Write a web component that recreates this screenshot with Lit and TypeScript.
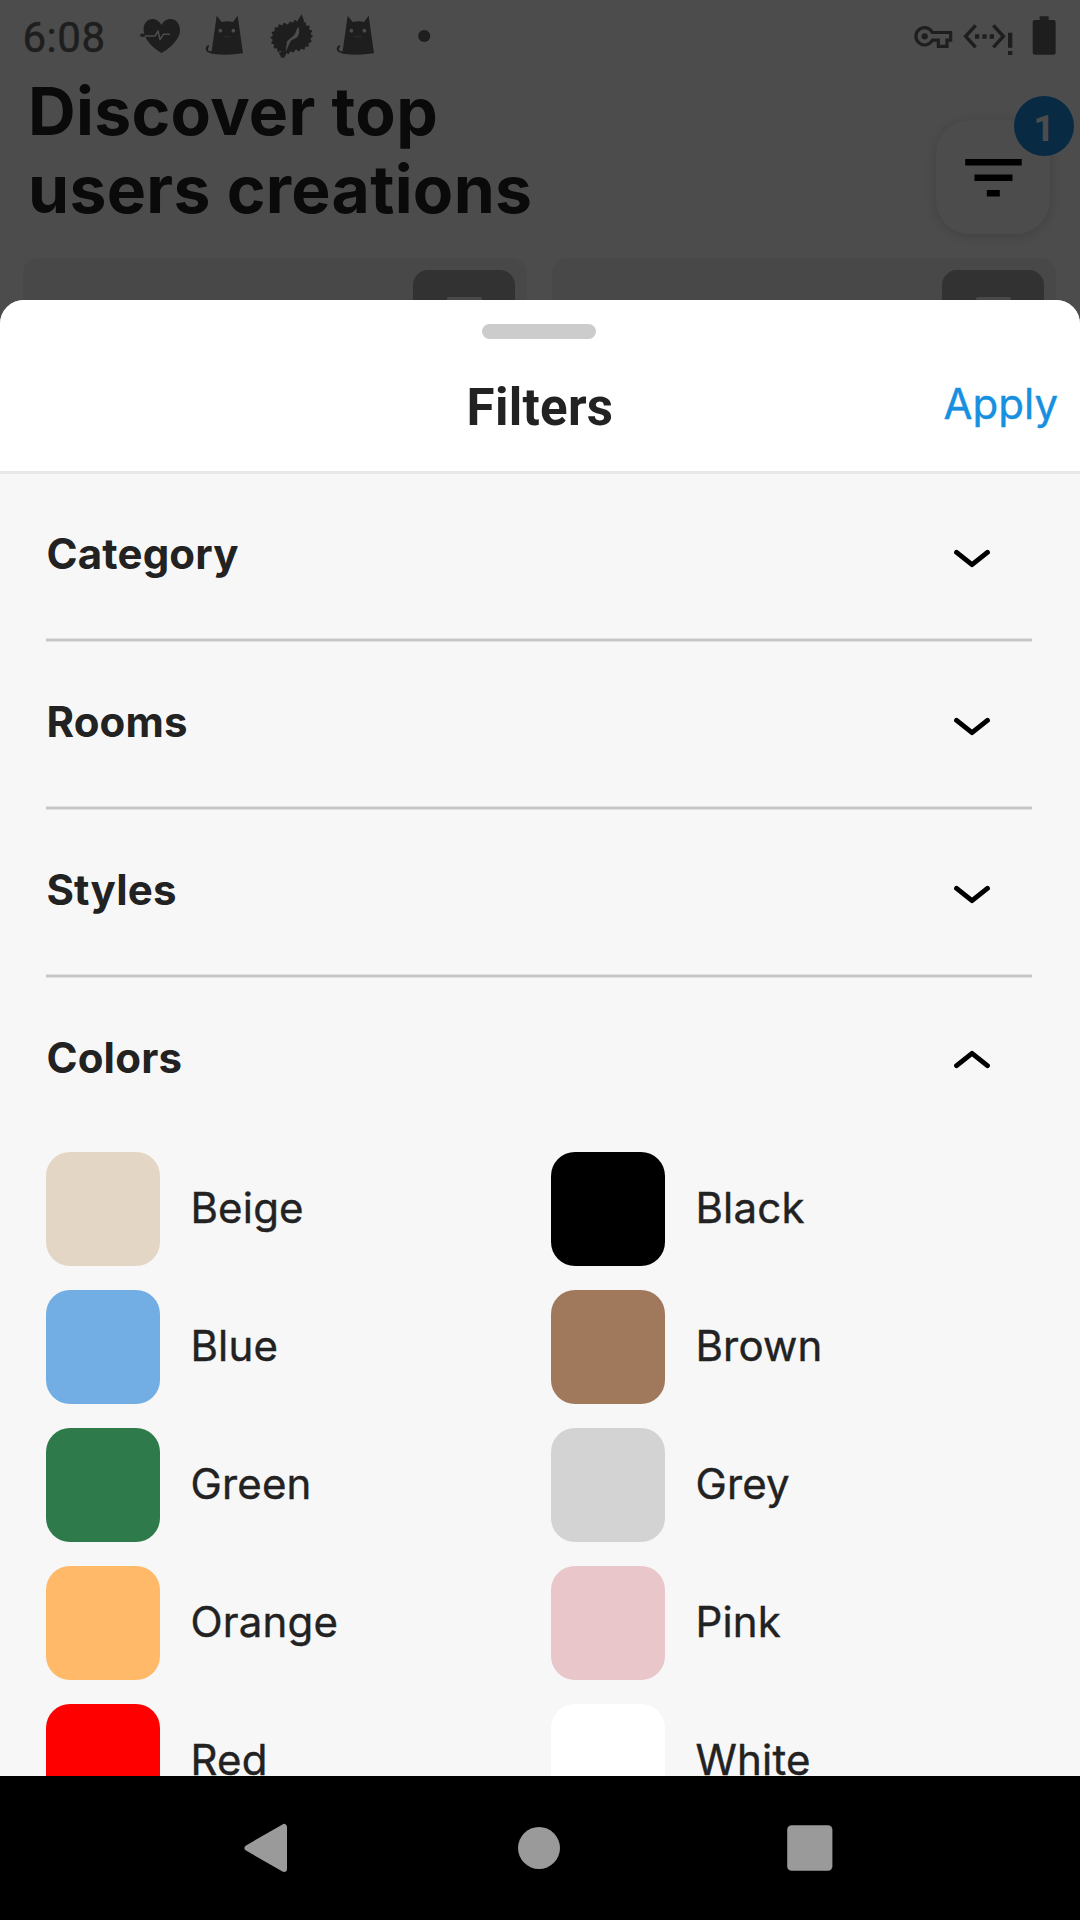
import { LitElement, html, css } from "lit";
import { customElement } from "lit/decorators.js";
import { styleMap } from "lit/directives/style-map.js";

const SECTIONS = ["Category", "Rooms", "Styles"];

const COLORS = [
  { name: "Beige", value: "#e4d6c4" },
  { name: "Black", value: "#000000" },
  { name: "Blue", value: "#72aee4" },
  { name: "Brown", value: "#a0785c" },
  { name: "Green", value: "#2e7a4a" },
  { name: "Grey", value: "#d3d3d3" },
  { name: "Orange", value: "#ffb969" },
  { name: "Pink", value: "#e9c6ca" },
  { name: "Red", value: "#ff0000" },
  { name: "White", value: "#ffffff" },
];

/** Outline of a toothed disc, drawn clockwise from the right. */
function toothedRing(cx: number, cy: number, outer: number, inner: number, teeth: number): string {
  const points: string[] = [];
  for (let i = 0; i < teeth * 4; i++) {
    const a = (i / (teeth * 4)) * Math.PI * 2;
    const r = i % 4 < 2 ? outer : inner;
    points.push(`${(cx + r * Math.cos(a)).toFixed(1)},${(cy + r * Math.sin(a)).toFixed(1)}`);
  }
  return points.join(" ");
}

const cat = html`<svg width="40" height="42" viewBox="610 42 120 126">
  <path fill="#666" d="M648 47L663 66Q680 62 697 66L711 47L727 160Q680 168 634 161Q614 158 615 145Q616 137 624 134L625 140Q619 147 624 152Q628 155 633 153Z" />
  <circle cx="659" cy="92" r="5.5" fill="#fff" />
  <circle cx="698" cy="92" r="5.5" fill="#fff" />
  <path d="M669 110h21" stroke="#8a8a8a" stroke-width="4" fill="none" />
</svg>`;

@customElement("status-bar")
export class StatusBar extends LitElement {
  static styles = css`
    :host {
      display: flex;
      align-items: flex-start;
      justify-content: space-between;
      height: 72px;
      padding: 0 24px 0 22.5px;
      box-sizing: border-box;
      color: #666;
      font: 400 42px/50px Roboto, sans-serif;
    }
    svg { display: block; flex: none; }
    .left, .right { display: flex; align-items: flex-start; }
    .left { padding-top: 13px; }
    .time { width: 117.5px; letter-spacing: 0.5px; -webkit-text-stroke: 0.5px #666; }
    .notes { display: flex; padding-top: 1px; }
    .gap-a { margin-right: 23px; }
    .gap-b { margin-right: 26px; }
    .gap-c { margin-right: 21px; }
    .gap-d { margin-right: 43px; }
    .right { padding-top: 15px; }
    .key { margin-right: 10px; }
    .net { margin-right: 19px; }
  `;
  render() {
    return html`
      <div class="left">
        <div class="time">6:08</div>
        <div class="notes">
          <svg class="gap-a" width="41" height="42" viewBox="420 42 123 126">
            <path fill="#666" d="M485 75C475 57 458 53 445 60C431 68 428 85 433 101H421V110H436C446 132 465 147 485 159C507 146 530 125 538 104C545 79 532 57 511 57C499 57 490 64 485 75Z" />
            <path d="M434 108H465L474 93L480 119L490 103H510" fill="none" stroke="#fff" stroke-width="4.5" stroke-linejoin="round" />
          </svg>
          <span class="gap-b">${cat}</span>
          <svg class="gap-c" width="44" height="46" viewBox="812 42 132 138">
            <polygon fill="#666" points="${toothedRing(861, 115, 47, 42, 18)}" />
            <polygon fill="#666" points="${toothedRing(893, 107, 47, 42, 18)}" />
            <path fill="#666" d="M886 76L907 43L914 62L906 92ZM838 158L847 174L856 172L866 150Z" />
            <path fill="#fff" d="M859 156L862 132C862 117 879 115 886 103C891 96 890 89 897 80C902 91 900 108 890 114C883 119 877 118 873 125Z" />
          </svg>
          <span class="gap-d">${cat}</span>
          <svg width="13" height="42" viewBox="0 0 13 42"><circle cx="6.2" cy="22" r="6.1" fill="#666" /></svg>
        </div>
      </div>
      <div class="right">
        <svg class="key" width="39" height="42" viewBox="102 45 117 126">
          <path d="M157 97.5A26 26 0 1 0 157 120.5H175V139H201V120.5H212V97.5Z" fill="none" stroke="#666" stroke-width="9.5" />
          <circle cx="134" cy="109" r="9.5" fill="#666" />
        </svg>
        <svg class="net" width="50" height="42" viewBox="249 45 150 126">
          <path d="M287 76L257 109L287 142M340 76L370 109L340 142" fill="none" stroke="#666" stroke-width="10.5" />
          <path d="M285 103h13v13h-13zM307 103h13v13h-13zM329 103h13v13h-13zM384 98h13v45h-13zM384 153h13v12h-13z" fill="#666" />
        </svg>
        <svg width="24" height="42" viewBox="457 45 72 126">
          <path fill="#666" d="M480 49H507V60H522Q528 60 528 66V158Q528 164 522 164H465Q459 164 459 158V66Q459 60 465 60H480Z" />
        </svg>
      </div>
    `;
  }
}

@customElement("discover-page")
export class DiscoverPage extends LitElement {
  static styles = css`
    :host { display: flex; flex-direction: column; height: 1776px; background: #fff; }
    .top { display: flex; justify-content: space-between; height: 186px; padding: 0 30px 0 28px; }
    h1 {
      margin: 0;
      width: 560px;
      color: #222;
      font: 700 66px/78px Inter, sans-serif;
      letter-spacing: 0.3px;
    }
    .filter {
      position: relative;
      display: flex;
      align-items: center;
      justify-content: center;
      width: 114px;
      height: 114px;
      margin-top: 48px;
      border-radius: 34px;
      background: #fff;
      box-shadow: 0 2px 14px rgba(0, 0, 0, 0.16);
    }
    .badge {
      position: absolute;
      top: -24px;
      right: -24px;
      width: 60px;
      height: 60px;
      border-radius: 50%;
      background: #1b90df;
      color: #fff;
      text-align: center;
      font: 700 37px/65px Roboto, sans-serif;
    }
    .cards { display: grid; grid-template-columns: 504px 504px; gap: 25px; padding: 0 23px; }
    .card {
      display: flex;
      justify-content: flex-end;
      height: 600px;
      padding: 12px;
      box-sizing: border-box;
      border-radius: 15px;
      background: #f0f0f0;
    }
    .save {
      display: flex;
      justify-content: center;
      width: 102px;
      height: 102px;
      padding-top: 27px;
      box-sizing: border-box;
      border-radius: 15px;
      background: #a8a8a8;
    }
    .mark { width: 35px; height: 48px; border-radius: 2px; background: #f4f4f4; }
  `;
  render() {
    return html`
      <status-bar></status-bar>
      <div class="top">
        <h1>Discover top<br />users creations</h1>
        <div class="filter">
          <svg width="58" height="40" viewBox="0 0 58 40">
            <path d="M1.2 2h56.5v6.5H1.2zM10.5 17.5h38v6.5h-38zM22.8 33h13v6.5h-13z" />
          </svg>
          <span class="badge">1</span>
        </div>
      </div>
      <div class="cards">
        <div class="card"><div class="save"><div class="mark"></div></div></div>
        <div class="card"><div class="save"><div class="mark"></div></div></div>
      </div>
    `;
  }
}

@customElement("filter-sheet")
export class FilterSheet extends LitElement {
  static styles = css`
    :host {
      display: flex;
      flex-direction: column;
      overflow: hidden;
      border-radius: 24px 24px 0 0;
      background: #f7f7f7;
      color: #222;
      font: 400 42px/50px Inter, sans-serif;
    }
    .head {
      display: flex;
      flex-direction: column;
      align-items: center;
      height: 174px;
      padding-top: 24px;
      box-sizing: border-box;
      flex: none;
      border-bottom: 3px solid #e8e8e8;
      background: #fff;
    }
    .handle { width: 114px; height: 15px; margin-right: 2px; border-radius: 8px; background: #ccc; }
    .bar {
      display: grid;
      grid-template-columns: 1fr auto 1fr;
      align-self: stretch;
      padding: 39px 22px 0;
    }
    h2 { margin: 0; grid-column: 2; font: 700 51px/60px Roboto, sans-serif; letter-spacing: 0.3px; }
    .apply { justify-self: end; color: #1790df; padding-top: 1px; -webkit-text-stroke: 0.4px #1790df; }
    .list { padding: 0 48px 0 46px; }
    .section {
      display: flex;
      justify-content: space-between;
      height: 168px;
      padding: 55px 42px 0 0;
      box-sizing: border-box;
      background: linear-gradient(#e0e0e0 0 1px, #c6c6c6 1px 3px, #e0e0e0 3px 4px) bottom / 100% 4px no-repeat;
    }
    .open { background: none; }
    .name { font-weight: 700; letter-spacing: 0.2px; padding-left: 0.4px; }
    .chevron { display: block; margin-top: 19px; }
    .up { margin-top: 17px; transform: scaleY(-1); }
    .swatches {
      display: grid;
      grid-template-columns: 505px 1fr;
      gap: 24px 0;
      padding-top: 6px;
    }
    .color { display: flex; align-items: center; gap: 30px; }
    .chip { width: 114.4px; height: 114px; border-radius: 24px; }
    .label { padding-bottom: 3px; letter-spacing: 0.2px; -webkit-text-stroke: 0.4px #222; }
  `;

  private section(name: string, open: boolean) {
    return html`<div class="section ${open ? "open" : ""}">
      <span class="name">${name}</span>
      <svg class="chevron ${open ? "up" : ""}" width="36" height="20" viewBox="0 0 36 20">
        <path d="M2.6 4.4L18 16.6L33.4 4.4" fill="none" stroke="#000" stroke-width="5" stroke-linecap="round" stroke-linejoin="round" />
      </svg>
    </div>`;
  }

  render() {
    return html`
      <div class="head">
        <div class="handle"></div>
        <div class="bar">
          <h2>Filters</h2>
          <span class="apply">Apply</span>
        </div>
      </div>
      <div class="list">
        ${SECTIONS.map((name) => this.section(name, false))}
        ${this.section("Colors", true)}
        <div class="swatches">
          ${COLORS.map(
            (c) => html`<div class="color">
              <div class="chip" style=${styleMap({ background: c.value })}></div>
              <span class="label">${c.name}</span>
            </div>`
          )}
        </div>
      </div>
    `;
  }
}

@customElement("nav-bar")
export class NavBar extends LitElement {
  static styles = css`
    :host {
      display: flex;
      align-items: center;
      justify-content: space-between;
      height: 144px;
      padding: 0 247px 0 243px;
      box-sizing: border-box;
      background: #000;
    }
    svg { display: block; }
  `;
  render() {
    const fill = "#9a9a9a";
    return html`
      <svg width="46" height="50" viewBox="0 0 46 50">
        <path d="M4.5 25L41 4V46Z" fill=${fill} stroke=${fill} stroke-width="6" stroke-linejoin="round" />
      </svg>
      <svg width="44" height="44" viewBox="0 0 44 44"><circle cx="23" cy="22" r="21" fill=${fill} /></svg>
      <svg width="46" height="46" viewBox="0 0 46 46"><rect x=".2" y=".3" width="45.2" height="45.4" rx="4.5" fill=${fill} /></svg>
    `;
  }
}

@customElement("app-root")
export class AppRoot extends LitElement {
  static styles = css`
    :host {
      display: flex;
      flex-direction: column;
      width: 1080px;
      height: 1920px;
      overflow: hidden;
    }
    .screen { position: relative; height: 1776px; overflow: hidden; }
    .scrim { position: absolute; inset: 0; background: rgba(0, 0, 0, 0.7); }
    .sheet { position: absolute; inset: 300px 0 0; }
  `;
  render() {
    return html`
      <div class="screen">
        <discover-page></discover-page>
        <div class="scrim"></div>
        <filter-sheet class="sheet"></filter-sheet>
      </div>
      <nav-bar></nav-bar>
    `;
  }
}
